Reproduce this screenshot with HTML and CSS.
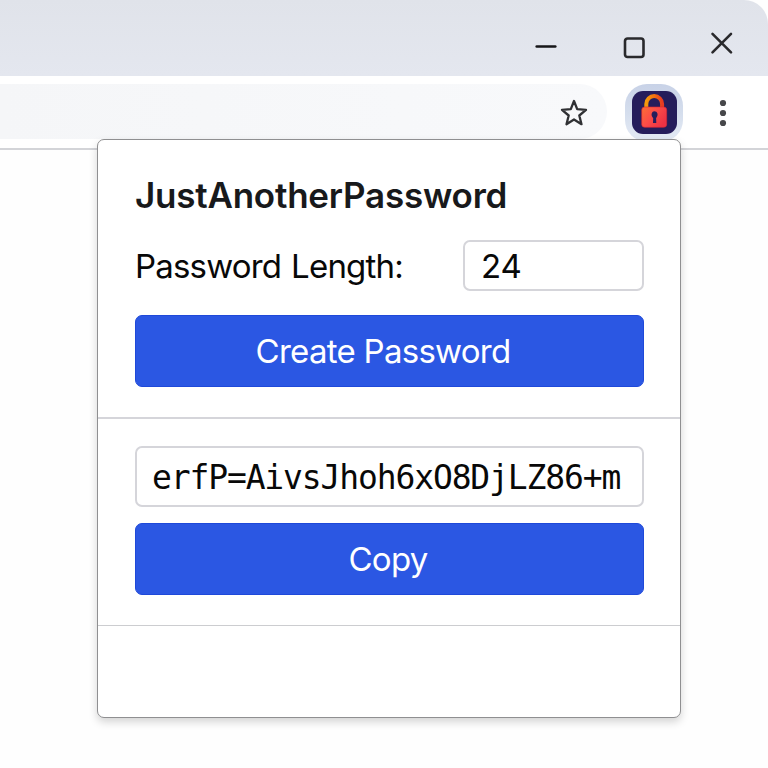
FILE: index.html
```html
<!DOCTYPE html>
<html lang="en">
<head>
<meta charset="utf-8">
<title>JustAnotherPassword</title>
<link rel="stylesheet" href="styles.css">
</head>
<body>
<div class="browser">
  <header class="titlebar">
    <svg class="win-icon minimize" width="24" height="24" viewBox="0 0 24 24"><path d="M2.7 12.5H21.3"/></svg>
    <svg class="win-icon maximize" width="24" height="24" viewBox="0 0 24 24"><rect x="3" y="2.5" width="18.5" height="18.5" rx="2.5"/></svg>
    <svg class="win-icon close" width="24" height="24" viewBox="0 0 24 24"><path d="M2.5 2.8L21 21.3M21 2.8L2.5 21.3"/></svg>
  </header>
  <div class="toolbar">
    <div class="address">
      <svg class="star" width="30" height="30" viewBox="0 0 30 30"><path d="M15 3L18.2 11.1L27 11.8L20.3 17.5L22.5 26.2L15 21.5L7.5 26.2L9.7 17.5L3 11.8L11.8 11.1Z"/></svg>
    </div>
    <div class="extension">
      <svg width="45" height="43" viewBox="0 0 45 43">
        <defs>
          <linearGradient id="shackle" x1="0" x2="1"><stop offset="0" stop-color="#f49a0b"/><stop offset=".5" stop-color="#f3710e"/><stop offset="1" stop-color="#e63b22"/></linearGradient>
          <linearGradient id="lock" x1="0" x2="1" y1="0" y2=".6"><stop offset="0" stop-color="#fa6f35"/><stop offset=".5" stop-color="#fb4c48"/><stop offset="1" stop-color="#ed3244"/></linearGradient>
        </defs>
        <rect width="45" height="43" rx="11" fill="#251d5b"/>
        <path d="M14.3 18V12.9a7.9 7.9 0 0 1 15.8 0V18" fill="none" stroke="url(#shackle)" stroke-width="4"/>
        <rect x="9.7" y="16" width="25" height="20.3" rx="3" fill="url(#lock)" stroke="#d92632" stroke-width=".6"/>
        <path d="M22.3 20.2c3.2 0 4.1 3.5 2.6 5.6l-.8 1.4.2 4.9h-3.3l.2-4.9-1-1.5c-1.3-2.3-.3-5.5 2.1-5.5Z" fill="#251d5b"/>
      </svg>
    </div>
    <svg class="more" width="8" height="28" viewBox="0 0 8 28"><circle cx="4" cy="4" r="3.1"/><circle cx="4" cy="14" r="3.1"/><circle cx="4" cy="24" r="3.1"/></svg>
  </div>
  <main class="popup">
    <section class="generate">
      <h1>JustAnotherPassword</h1>
      <div class="length-row">
        <label for="length">Password Length:</label>
        <input id="length" class="length" type="text" value="24">
      </div>
      <button class="create" type="button">Create Password</button>
    </section>
    <section class="result">
      <div class="password">erfP=AivsJhoh6xO8DjLZ86+m</div>
      <button class="copy" type="button">Copy</button>
    </section>
  </main>
</div>
</body>
</html>
```
FILE: styles.css
```css
* { box-sizing: border-box; }
body {
  margin: 0;
  width: 768px;
  height: 768px;
  overflow: hidden;
  background: #fefefe;
  color: #080808;
  font-family: Inter, "Liberation Sans", sans-serif;
}
.titlebar {
  display: flex;
  justify-content: flex-end;
  height: 76px;
  padding: 31px 34px 0 0;
  gap: 64px;
  background: linear-gradient(#e0e3ea, #e4e7ef);
  border-radius: 0 24px 0 0;
}
.win-icon { fill: none; stroke: #29292c; stroke-width: 2.6; stroke-linecap: round; }
.minimize { margin: 3px 0 0; stroke: #161618; }
.maximize { margin-top: 5px; }
.toolbar {
  display: flex;
  height: 74px;
  padding-top: 8px;
  background: #fff;
  border-bottom: 2px solid #d3d4d8;
}
.address {
  width: 607px;
  height: 55px;
  padding: 14px 18.5px 0 0;
  display: flex;
  justify-content: flex-end;
  background: linear-gradient(90deg, #f5f6f8, #f8f9fb);
  border-radius: 0 28px 28px 0;
}
.star { fill: none; stroke: #303134; stroke-width: 2.3; stroke-linejoin: round; }
.extension {
  width: 58px;
  height: 58px;
  margin-left: 18px;
  padding: 7px 0 0 6.5px;
  background: linear-gradient(#c8d2e7, #d5deed 50%, #e5ebf5);
  border-radius: 22px;
}
.extension svg { display: block; }
.more { margin: 15px 0 0 36px; fill: #46474a; }
.popup {
  position: absolute;
  left: 97px;
  top: 139px;
  width: 584px;
  height: 579px;
  background: #fff;
  border: 1.5px solid #8f8f91;
  border-radius: 7px;
  box-shadow: 0 4px 8px rgba(0,0,0,.17);
}
.generate {
  height: 279px;
  padding: 34px 36px 0 37px;
  border-bottom: 2px solid #d5d5da;
}
h1 {
  margin: 0;
  height: 42px;
  line-height: 42px;
  font-size: 35px;
  font-weight: 600;
  letter-spacing: -.22px;
  color: #18191b;
  white-space: nowrap;
}
.length-row {
  display: flex;
  justify-content: space-between;
  align-items: center;
  height: 51px;
  margin-top: 24px;
}
label { font-size: 33px; letter-spacing: -.82px; word-spacing: 1.5px; white-space: nowrap; }
.length {
  width: 181px;
  height: 51px;
  padding: 0 16px;
  font: 33px Inter, sans-serif;
  color: #080808;
  background: #fff;
  border: 2px solid #d5d5da;
  border-radius: 7px;
}
button {
  display: flex;
  align-items: center;
  justify-content: center;
  width: 509px;
  height: 72px;
  padding: 0;
  border: 1px solid #1f49d9;
  border-radius: 7px;
  background: #2b57e3;
  color: #fff;
  font: 33px Inter, sans-serif;
  letter-spacing: -.72px;
}
.create { margin-top: 24px; padding-right: 13px; }
.result {
  height: 207px;
  padding: 27px 36px 0 37px;
  border-bottom: 1.5px solid #cccdd0;
}
.password {
  width: 509px;
  height: 61px;
  padding-left: 15px;
  line-height: 60px;
  border: 2px solid #d5d5da;
  border-radius: 7px;
  font-family: "DejaVu Sans Mono", monospace;
  font-size: 33px;
  letter-spacing: -1.14px;
  white-space: pre;
}
.copy { margin-top: 16px; padding-right: 3px; }
```
